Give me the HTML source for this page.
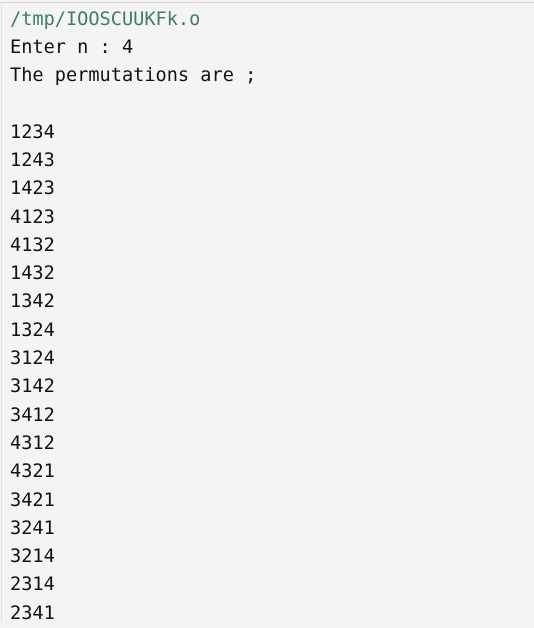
<!DOCTYPE html>
<html><head><meta charset="utf-8"><style>
html,body{margin:0;padding:0;}
body{width:534px;height:622px;background:#f4f4f4;overflow:hidden;position:relative;}
.top{position:absolute;left:0;top:2px;width:534px;height:1px;background:#d4d6da;}
.left{position:absolute;left:1px;top:2px;width:1px;height:620px;background:#e2e3e6;}
pre{position:absolute;left:10px;top:5.5px;margin:0;font-family:"DejaVu Sans Mono","Liberation Mono",monospace;font-size:18.6px;line-height:28.3px;color:#111;}
.g{color:#3e7d6a;}
</style></head><body>
<div class="top"></div><div class="left"></div>
<pre><span class="g">/tmp/IOOSCUUKFk.o</span>
Enter n : 4
The permutations are ;

1234
1243
1423
4123
4132
1432
1342
1324
3124
3142
3412
4312
4321
3421
3241
3214
2314
2341</pre>
</body></html>
